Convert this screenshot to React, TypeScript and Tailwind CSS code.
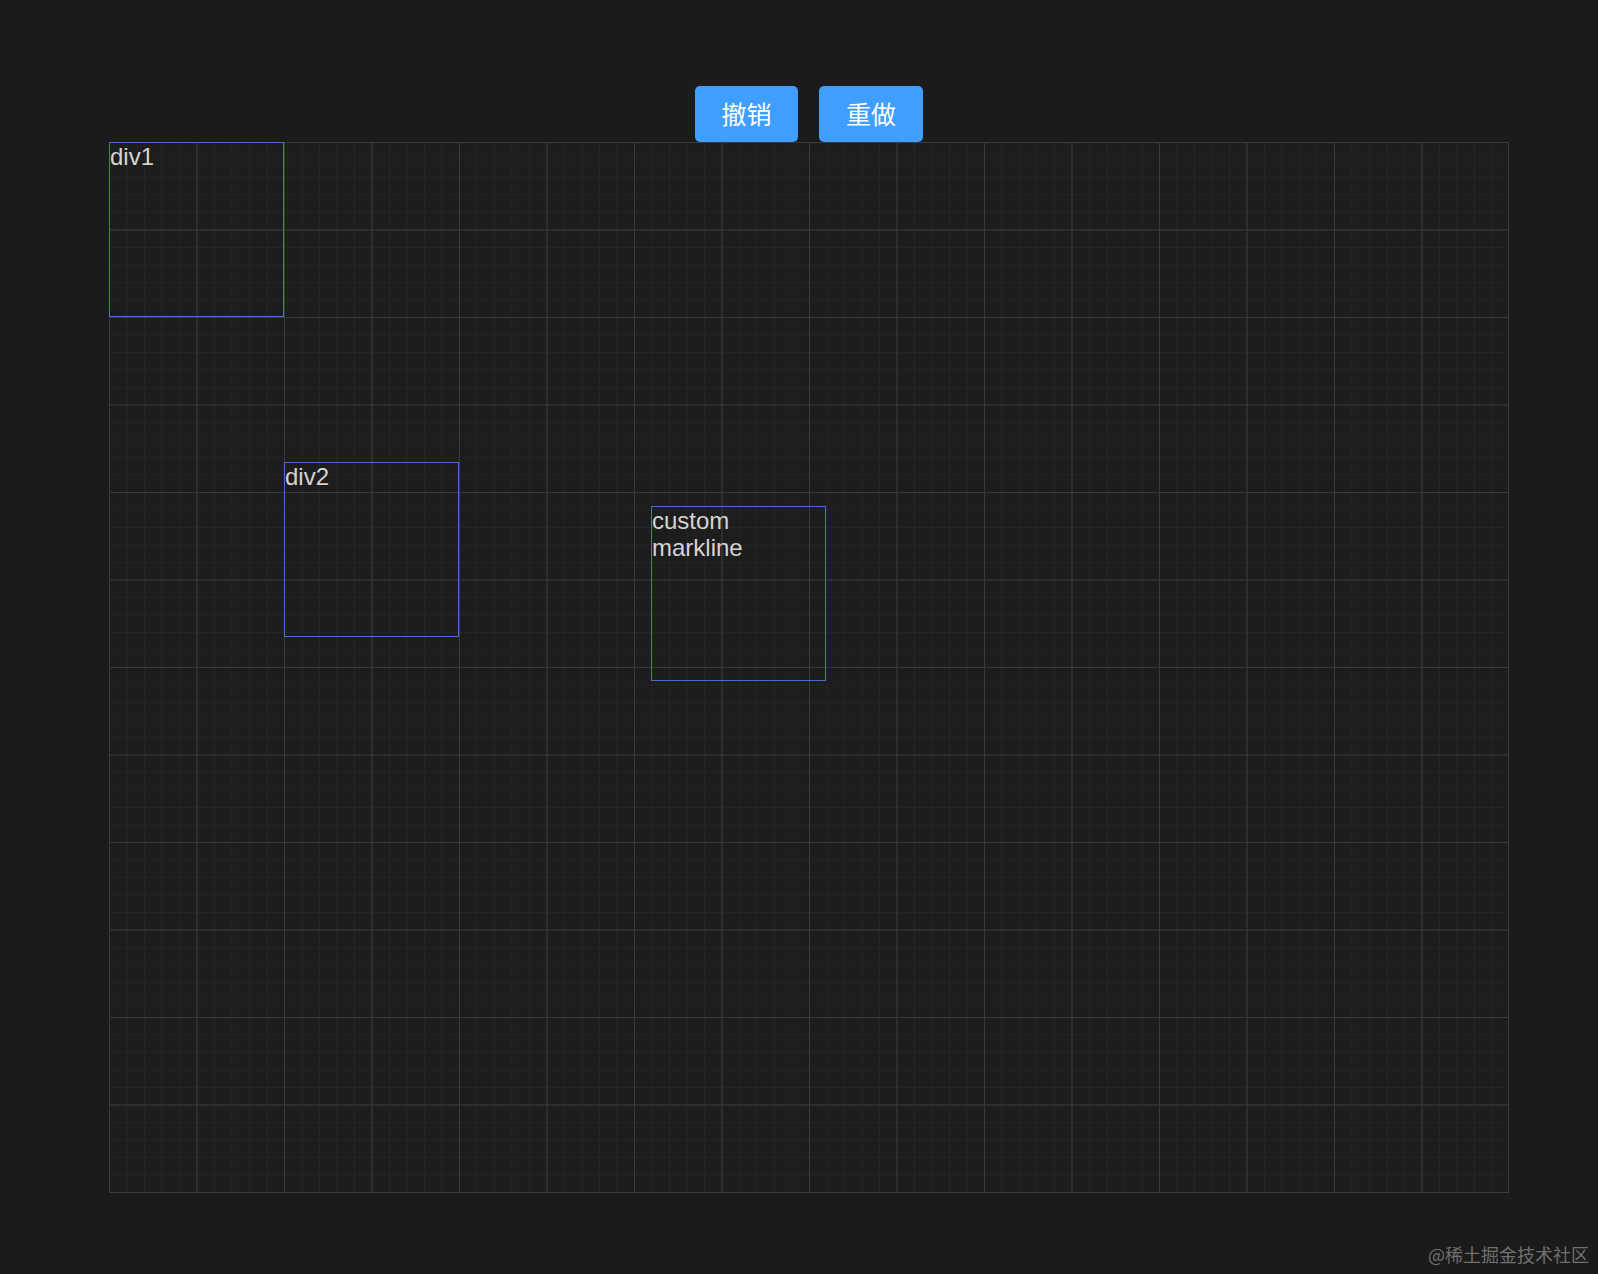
import React from "react";

const boxes = [
  { id: "div1", label: "div1", cls: "left-0 top-0" },
  { id: "div2", label: "div2", cls: "left-[175px] top-[320px]" },
  { id: "custom", label: "custom markline", cls: "left-[542px] top-[364px]" },
];

export default function App() {
  return (
    <div className="relative h-[1274px] w-full overflow-hidden bg-[#1b1b1b] pl-[109px] pt-[86px]">
      {/* toolbar */}
      <div className="flex w-[1400px] justify-center gap-[21px]">
        <button className="h-[56px] w-[103px] rounded-[5px] bg-[#409eff] text-[25px] text-white [font-family:'Noto_Sans_CJK_SC',sans-serif]">
          撤销
        </button>
        <button className="h-[56px] w-[104px] rounded-[5px] bg-[#409eff] text-[25px] text-white [font-family:'Noto_Sans_CJK_SC',sans-serif]">
          重做
        </button>
      </div>

      {/* editor canvas */}
      <div className="relative h-[1051px] w-[1400px] bg-[#1d1d1d] [background-image:linear-gradient(to_right,#3a3a3a_1px,transparent_1px),linear-gradient(to_bottom,#3a3a3a_1px,transparent_1px),linear-gradient(to_right,#242424_1px,transparent_1px),linear-gradient(to_bottom,#242424_1px,transparent_1px)] [background-size:87.5px_87.5px,87.5px_87.5px,17.5px_17.5px,17.5px_17.5px] border-r border-[#3a3a3a]">
        {boxes.map((b) => (
          <div
            key={b.id}
            className={`absolute h-[175px] w-[175px] border border-[#4a6fc9] text-[24px] leading-[27px] text-[#d4d4d4] [font-family:'Liberation_Sans',Arial,sans-serif] ${b.cls}`}
          >
            {b.label}
          </div>
        ))}
      </div>

      <div className="absolute bottom-[6px] right-[9px] text-[18px] text-[#707070] [font-family:'Noto_Sans_CJK_SC',serif]">
        @稀土掘金技术社区
      </div>
    </div>
  );
}
